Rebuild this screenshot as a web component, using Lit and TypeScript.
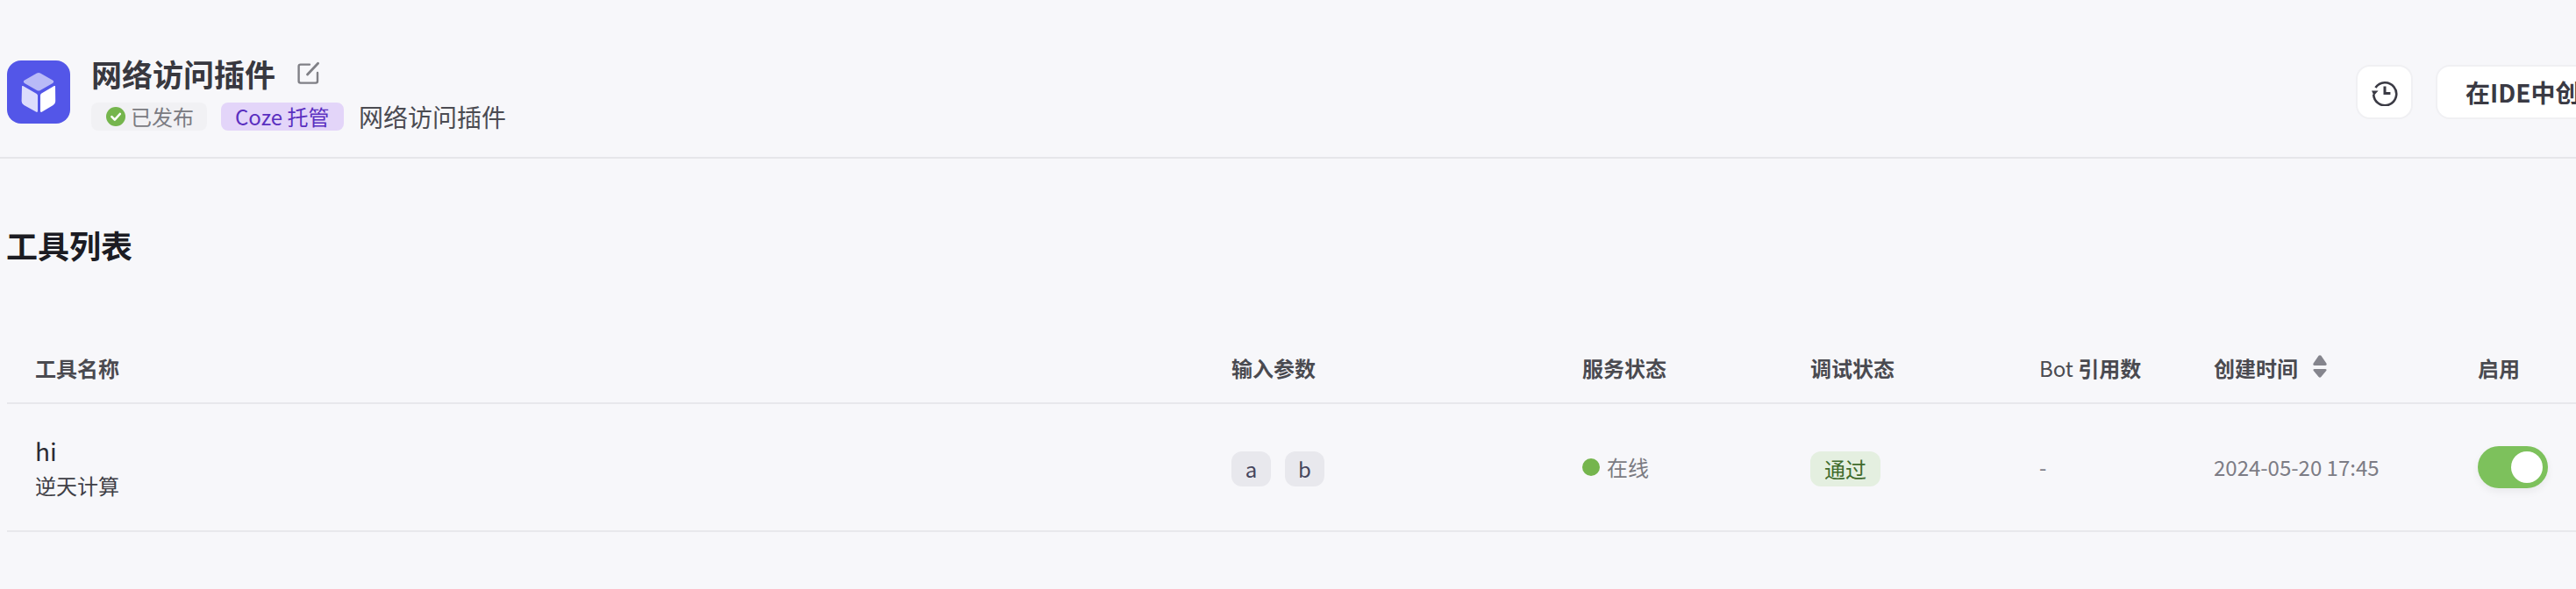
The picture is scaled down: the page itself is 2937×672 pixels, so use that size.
import { LitElement, html, css } from "lit";
import { customElement } from "lit/decorators.js";

const cube = html`<svg width="72" height="72" viewBox="8 8 72 72">
  <path d="M42 22.6 Q44 21.6 46 22.6 L60 30.6 Q62.4 32.3 60 34 L46 42 Q44 43 42 42 L28 34 Q25.6 32.3 28 30.6 Z" fill="#b9baf7"/>
  <path d="M25 37.4 Q25 36.6 26.2 37.1 L41.8 46 Q43 46.8 43 48 L43 65.6 Q43 67.4 41.4 66.8 L27.4 59 Q24.6 57.4 24.6 54.6 Z" fill="#dcdcfc"/>
  <path d="M63 37.4 Q63 36.6 61.8 37.1 L47 45.8 Q46 46.6 46 48 L46 65.6 Q46 67.4 47.6 66.8 L60.6 59 Q63.2 57.4 63.2 54.6 Z" fill="#ffffff"/>
</svg>`;

const editIcon = html`<svg width="26" height="26" viewBox="0 0 26 26" fill="none" stroke="#808086" stroke-width="2.4" stroke-linecap="round" stroke-linejoin="round">
  <path d="M14 3.6 H3.6 Q1.6 3.6 1.6 5.6 V22.6 Q1.6 24.6 3.6 24.6 H21 Q23 24.6 23 22.6 V13"/>
  <path d="M11.5 15 L23.6 2.2" stroke-width="2.8"/>
</svg>`;

const historyIcon = html`<svg width="32" height="32" viewBox="0 0 32 32" fill="none" stroke="#3a3a44" stroke-width="2.6">
  <path d="M5.4 11 A13 13 0 1 1 3.2 18.6"/>
  <path d="M1 14.6 H8.6 L3.6 20 Z" fill="#3a3a44" stroke="none"/>
  <path d="M16 9.4 V17.4 H22.4" stroke-width="3"/>
</svg>`;

const checkIcon = html`<svg width="22" height="22" viewBox="0 0 22 22">
  <circle cx="11" cy="11" r="11" fill="#75b54d"/>
  <path d="M6.4 11.2 L9.8 14.6 L15.8 8" fill="none" stroke="#fff" stroke-width="2.6" stroke-linecap="round" stroke-linejoin="round"/>
</svg>`;

const sortIcon = html`<svg width="16" height="26" viewBox="0 0 16 26" fill="#85858d">
  <path d="M6.6 0.8 Q8 -0.4 9.4 0.8 L15.4 9.6 Q16.4 12 14 12 H2 Q-0.4 12 0.6 9.6 Z"/>
  <path d="M2 16 H14 Q16.4 16 15.2 18 L9.4 25 Q8 26.4 6.6 25 L0.8 18 Q-0.4 16 2 16 Z"/>
</svg>`;

@customElement("app-root")
export class AppRoot extends LitElement {
  static styles = css`
    :host {
      display: block;
      width: 2937px;
      height: 672px;
      overflow: hidden;
      background: #f7f7fa;
      font-family: "Noto Sans CJK SC", "Noto Sans", sans-serif;
      color: #2b2b33;
    }
    .header {
      box-sizing: border-box;
      width: 2937px;
      height: 181px;
      border-bottom: 2px solid #e6e6ea;
      display: flex;
      align-items: flex-start;
      padding: 69px 0 0 8px;
    }
    .logo {
      flex: none;
      width: 72px;
      height: 72px;
      border-radius: 16px;
      background: #5356e8;
      margin-right: 24px;
    }
    .logo svg { display: block; }
    .info {
      flex: none;
      width: 2582px;
      display: flex;
      flex-direction: column;
      margin-top: -9px;
    }
    .title-row {
      display: flex;
      align-items: center;
      height: 48px;
      gap: 25px;
    }
    .title {
      font-size: 35px;
      line-height: 48px;
      font-weight: 700;
      color: #38383f;
    }
    .title-row svg { display: block; margin-top: -3px; }
    .meta {
      display: flex;
      align-items: center;
      margin-top: 9px;
      height: 32px;
    }
    .tag {
      height: 32px;
      border-radius: 8px;
      display: flex;
      align-items: center;
      font-size: 24px;
      line-height: 32px;
      box-sizing: border-box;
    }
    .published {
      width: 132px;
      padding-left: 17px;
      gap: 6px;
      background: #f1f1f4;
      color: #7b7b82;
      margin-right: 16px;
    }
    .published svg { display: block; flex: none; }
    .hosted {
      width: 140px;
      padding-left: 16px;
      background: #e3d5f9;
      color: #5a2fc0;
      margin-right: 17px;
    }
    .desc {
      font-size: 28px;
      line-height: 32px;
      color: #4b4b52;
    }
    .actions {
      flex: none;
      display: flex;
      gap: 26px;
      margin-top: 5px;
    }
    .btn {
      box-sizing: border-box;
      height: 62px;
      background: #fff;
      border: 2px solid #f0f0f3;
      border-radius: 16px;
      display: flex;
      align-items: center;
      justify-content: center;
      flex: none;
    }
    .btn-icon { width: 65px; }
    .btn-text {
      padding: 0 32px;
      font-size: 28px;
      font-weight: 700;
      color: #3a3a44;
      white-space: nowrap;
    }
    h2 {
      margin: 0;
      padding: 74px 0 0 7px;
      font-size: 36px;
      line-height: 48px;
      font-weight: 700;
      color: #1c1c23;
    }
    .table { margin: 0 0 0 8px; padding-top: 97px; }
    .row {
      display: grid;
      grid-template-columns: 1364px 400px 260px 261px 199px 301px 1fr;
      padding-left: 32px;
      align-items: center;
      box-sizing: border-box;
      border-bottom: 2px solid #e8e8ec;
    }
    .head {
      height: 61px;
      padding-bottom: 20px;
      font-size: 24px;
      line-height: 32px;
      font-weight: 700;
      color: #4a4a50;
    }
    .head .sort {
      display: flex;
      align-items: center;
      gap: 17px;
    }
    .head .sort svg { display: block; margin-top: -4px; }
    .bot { white-space: pre; }
    .bot span { font-weight: 400; }
    .body {
      height: 146px;
      font-size: 24px;
      line-height: 32px;
    }
    .name {
      font-size: 28px;
      line-height: 36px;
      font-weight: 400;
      color: #2b2b33;
    }
    .name-desc {
      margin-top: 6px;
      font-size: 24px;
      line-height: 32px;
      color: #3f3f46;
    }
    .params { display: flex; gap: 16px; margin-top: 4px; }
    .chip {
      box-sizing: border-box;
      height: 40px;
      width: 45px;
      border-radius: 12px;
      background: #e8e8ed;
      color: #45455c;
      display: flex;
      align-items: center;
      justify-content: center;
      font-size: 24px;
      line-height: 40px;
    }
    .online {
      display: flex;
      align-items: center;
      gap: 8px;
      color: #7b7b82;
    }
    .dot { width: 20px; height: 20px; border-radius: 50%; background: #75b54d; flex: none; }
    .pass {
      width: 80px;
      height: 40px;
      box-sizing: border-box;
      border-radius: 12px;
      background: #e4efe0;
      color: #3f6b2c;
      display: flex;
      align-items: center;
      justify-content: center;
      margin-top: 4px;
    }
    .muted { color: #7c7c85; }
    .switch {
      position: relative;
      width: 80px;
      height: 48px;
      border-radius: 24px;
      background: #7dc15c;
      box-shadow: 0 4px 10px rgba(0, 0, 0, 0.06);
    }
    .knob {
      position: absolute;
      top: 6px;
      right: 6px;
      width: 36px;
      height: 36px;
      border-radius: 50%;
      background: #fff;
    }
  `;

  render() {
    return html`
      <div class="header">
        <div class="logo">${cube}</div>
        <div class="info">
          <div class="title-row"><span class="title">网络访问插件</span>${editIcon}</div>
          <div class="meta">
            <div class="tag published">${checkIcon}<span>已发布</span></div>
            <div class="tag hosted">Coze 托管</div>
            <div class="desc">网络访问插件</div>
          </div>
        </div>
        <div class="actions">
          <div class="btn btn-icon">${historyIcon}</div>
          <div class="btn btn-text">在IDE中创建工具</div>
        </div>
      </div>
      <h2>工具列表</h2>
      <div class="table">
        <div class="row head">
          <div>工具名称</div>
          <div>输入参数</div>
          <div>服务状态</div>
          <div>调试状态</div>
          <div class="bot"><span>Bot</span> 引用数</div>
          <div class="sort">创建时间${sortIcon}</div>
          <div>启用</div>
        </div>
        <div class="row body">
          <div>
            <div class="name">hi</div>
            <div class="name-desc">逆天计算</div>
          </div>
          <div class="params"><div class="chip">a</div><div class="chip">b</div></div>
          <div class="online"><span class="dot"></span>在线</div>
          <div><div class="pass">通过</div></div>
          <div class="muted">-</div>
          <div class="muted">2024-05-20 17:45</div>
          <div><div class="switch"><div class="knob"></div></div></div>
        </div>
      </div>
    `;
  }
}
